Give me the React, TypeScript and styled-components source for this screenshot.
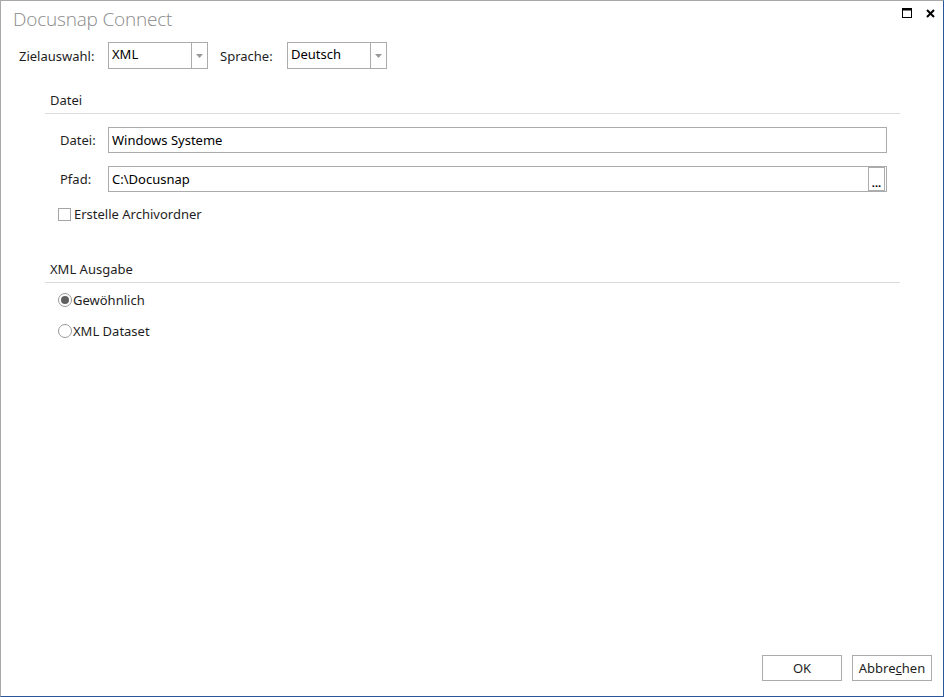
import React from "react";
import styled, { createGlobalStyle } from "styled-components";

const GlobalStyle = createGlobalStyle`
  html, body {
    margin: 0;
    padding: 0;
    background: #fff;
  }
  body {
    font-family: "Noto Sans", "Open Sans", sans-serif;
    font-size: 13px;
    line-height: 16px;
    color: #1e1e1e;
  }
`;

const Window = styled.div`
  box-sizing: border-box;
  width: 944px;
  height: 697px;
  display: flex;
  flex-direction: column;
  background: #fff;
  border-top: 1px solid #a8a8a8;
  border-left: 1px solid #a8a8a8;
  border-right: 1px solid #2b579a;
  border-bottom: 1px solid #2b579a;
`;

const TitleBar = styled.div`
  display: flex;
  align-items: center;
  justify-content: space-between;
  height: 36px;
  padding: 0 8px 0 12px;
`;

const Title = styled.h1`
  margin: 0;
  font-family: "Open Sans", "Noto Sans", sans-serif;
  font-weight: 300;
  font-size: 19px;
  line-height: 24px;
  color: #8a8a8a;
  letter-spacing: -0.2px;
`;

const TitleButtons = styled.div`
  display: flex;
  align-items: center;
  gap: 14px;
  margin-top: -12px;
`;

const TopRow = styled.div`
  display: flex;
  align-items: center;
  padding: 5px 0 0 18px;
  height: 27px;
`;

const Label = styled.span<{ $width?: number; $indent?: number }>`
  box-sizing: border-box;
  width: ${(p) => (p.$width ? `${p.$width}px` : "auto")};
  padding-left: ${(p) => p.$indent ?? 0}px;
  flex: none;
`;

const Combo = styled.div`
  box-sizing: border-box;
  display: flex;
  width: 100px;
  height: 27px;
  border: 1px solid #ababab;
  background: #fff;
`;

const ComboText = styled.div`
  flex: 1;
  padding: 3px 3px;
  color: #000;
`;

const ComboArrow = styled.div`
  width: 15px;
  border-left: 1px solid #ababab;
  display: flex;
  align-items: center;
  justify-content: center;
`;

const Content = styled.div`
  flex: 1;
  display: flex;
  flex-direction: column;
  padding: 23px 43px 0 44px;
`;

const GroupHeader = styled.div`
  padding: 0 0 5px 5px;
  border-bottom: 1px solid #dcdcdc;
  color: #1e1e1e;
`;

const Group = styled.section<{ $gap?: number }>`
  margin-bottom: ${(p) => p.$gap ?? 0}px;
`;

const FieldRow = styled.div`
  display: flex;
  align-items: center;
  height: 26px;
  margin-top: 13px;
  padding-left: 15px;
  margin-right: 13px;
`;

const TextBox = styled.div`
  box-sizing: border-box;
  flex: 1;
  height: 26px;
  display: flex;
  align-items: center;
  border: 1px solid #ababab;
  padding: 0 3px;
  color: #000;
`;

const BoxText = styled.span`
  flex: 1;
`;

const EllipsisButton = styled.div`
  box-sizing: border-box;
  width: 17px;
  height: 24px;
  margin-right: -2px;
  border: 1px solid #ababab;
  display: flex;
  align-items: flex-end;
  justify-content: center;
  font-size: 11px;
  line-height: 14px;
  font-weight: bold;
  color: #000;
`;

const CheckRow = styled.label`
  display: flex;
  align-items: center;
  gap: 3px;
  margin-top: 14px;
  padding-left: 13px;
  height: 16px;
`;

const CheckBox = styled.span`
  box-sizing: border-box;
  width: 13px;
  height: 13px;
  border: 1px solid #a5a5a5;
  background: #fff;
`;

const RadioRow = styled.label`
  display: flex;
  align-items: center;
  gap: 1px;
  margin-top: 6px;
  padding-left: 13px;
  height: 21px;

  & + & {
    margin-top: 10px;
  }
`;

const Radio = styled.span<{ $checked?: boolean }>`
  box-sizing: border-box;
  width: 14px;
  height: 14px;
  border-radius: 50%;
  border: 1px solid #9a9a9a;
  background: #fff;
  display: flex;
  align-items: center;
  justify-content: center;

  &::after {
    content: "";
    width: 8px;
    height: 8px;
    border-radius: 50%;
    background: ${(p) => (p.$checked ? "#606060" : "transparent")};
  }
`;

const Footer = styled.div`
  display: flex;
  justify-content: flex-end;
  gap: 10px;
  padding: 0 11px 15px 0;
`;

const Button = styled.button`
  box-sizing: border-box;
  width: 80px;
  height: 26px;
  border: 1px solid #ababab;
  background: #fff;
  font-family: inherit;
  font-size: 13px;
  color: #1e1e1e;
  padding: 0;
`;

function DropArrow() {
  return (
    <svg width="7" height="4" viewBox="0 0 7 4">
      <path d="M0 0h7L3.5 4z" fill="#9a9a9a" />
    </svg>
  );
}

export default function App() {
  return (
    <>
      <GlobalStyle />
      <Window>
        <TitleBar>
          <Title>Docusnap Connect</Title>
          <TitleButtons>
            <svg width="10" height="10" viewBox="0 0 10 10">
              <rect x="0.5" y="0.5" width="9" height="9" fill="none" stroke="#000" />
              <rect x="0" y="0" width="10" height="2.5" fill="#000" />
            </svg>
            <svg width="9" height="9" viewBox="0 0 9 9">
              <path d="M1 1L8 8M8 1L1 8" stroke="#000" strokeWidth="2" />
            </svg>
          </TitleButtons>
        </TitleBar>
        <TopRow>
          <Label $width={89}>Zielauswahl:</Label>
          <Combo>
            <ComboText>XML</ComboText>
            <ComboArrow>
              <DropArrow />
            </ComboArrow>
          </Combo>
          <Label $width={79} $indent={12}>
            Sprache:
          </Label>
          <Combo>
            <ComboText>Deutsch</ComboText>
            <ComboArrow>
              <DropArrow />
            </ComboArrow>
          </Combo>
        </TopRow>
        <Content>
          <Group $gap={39}>
            <GroupHeader>Datei</GroupHeader>
            <FieldRow>
              <Label $width={48}>Datei:</Label>
              <TextBox>
                <BoxText>Windows Systeme</BoxText>
              </TextBox>
            </FieldRow>
            <FieldRow>
              <Label $width={48}>Pfad:</Label>
              <TextBox>
                <BoxText>C:\Docusnap</BoxText>
                <EllipsisButton>...</EllipsisButton>
              </TextBox>
            </FieldRow>
            <CheckRow>
              <CheckBox />
              Erstelle Archivordner
            </CheckRow>
          </Group>
          <Group>
            <GroupHeader>XML Ausgabe</GroupHeader>
            <RadioRow>
              <Radio $checked />
              Gewöhnlich
            </RadioRow>
            <RadioRow>
              <Radio />
              XML Dataset
            </RadioRow>
          </Group>
        </Content>
        <Footer>
          <Button>OK</Button>
          <Button>
            Abbre<u>c</u>hen
          </Button>
        </Footer>
      </Window>
    </>
  );
}
